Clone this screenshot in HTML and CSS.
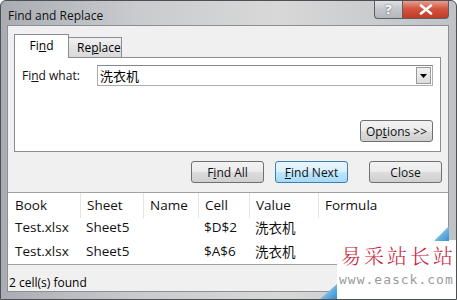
FILE: index.html
```html
<!DOCTYPE html>
<html lang="en">
<head>
    <meta charset="UTF-8">
    <title>Find and Replace</title>
    <link rel="stylesheet" href="styles.css">
</head>
<body>
    <div class="window">
        <div class="titlebar">
            <span class="title">Find and Replace</span>
            <div class="caption-btns">
                <div class="cap help">?</div>
                <div class="cap close">
                    <svg width="14" height="11" viewBox="0 0 14 11"><path d="M2 1.5 L12 9.5 M12 1.5 L2 9.5" stroke="#fff" stroke-width="2.6" stroke-linecap="round"/></svg>
                </div>
            </div>
        </div>
        <div class="client">
            <div class="tabs">
                <div class="tab active">Fi<u>n</u>d</div>
                <div class="tab">Re<u>p</u>lace</div>
            </div>
            <div class="panel">
                <div class="find-row">
                    <label class="find-label">Fi<u>n</u>d what:</label>
                    <div class="combo">
                        <span class="combo-text">洗衣机</span>
                        <div class="combo-arrow">
                            <svg width="7" height="4" viewBox="0 0 7 4"><path d="M0 0 H7 L3.5 4 Z" fill="#000"/></svg>
                        </div>
                    </div>
                </div>
                <div class="options-row">
                    <button class="btn options">Op<u>t</u>ions &gt;&gt;</button>
                </div>
            </div>
            <div class="actions">
                <button class="btn find-all">F<u>i</u>nd All</button>
                <button class="btn default find-next"><u>F</u>ind Next</button>
                <button class="btn">Close</button>
            </div>
            <div class="results">
                <div class="grid head">
                    <div>Book</div><div>Sheet</div><div>Name</div><div>Cell</div><div>Value</div><div>Formula</div>
                </div>
                <div class="grid row">
                    <div>Test.xlsx</div><div>Sheet5</div><div></div><div>$D$2</div><div class="cjk">洗衣机</div><div></div>
                </div>
                <div class="grid row">
                    <div>Test.xlsx</div><div>Sheet5</div><div></div><div>$A$6</div><div class="cjk">洗衣机</div><div></div>
                </div>
            </div>
            <div class="status">2 cell(s) found</div>
        </div>
        <div class="watermark">
            <div class="tri tri-top"></div>
            <div class="tri tri-bottom"></div>
            <div class="wm-cn">易采站长站</div>
            <div class="wm-url">www.easck.com</div>
        </div>
    </div>
</body>
</html>
```

FILE: styles.css
```css
body {
    margin: 0;
    font-family: "Open Sans", "Noto Sans CJK SC", sans-serif;
    font-size: 12px;
    color: #000;
    background: #fff;
}
.window {
    position: relative;
    width: 457px;
    height: 300px;
    box-sizing: border-box;
    background: linear-gradient(90deg, #a9adb3 0%, #c9cbce 30%, #d8d8d8 60%, #bfc2c6 100%);
    border: 1px solid #4d4f52;
    border-radius: 6px 6px 0 0;
    padding: 0 7px 7px 6px;
    display: flex;
    flex-direction: column;
    overflow: hidden;
}
.titlebar {
    height: 27px;
    display: flex;
    justify-content: space-between;
    align-items: flex-start;
}
.title {
    margin-top: 6px;
    margin-left: 1px;
    font-size: 12px;
    color: #111;
}
.caption-btns {
    display: flex;
    margin-top: -1px;
}
.cap {
    height: 19px;
    border: 1px solid #5b5e63;
    border-top: none;
    box-sizing: border-box;
    display: flex;
    align-items: center;
    justify-content: center;
}
.help {
    width: 28px;
    border-radius: 0 0 0 4px;
    background: linear-gradient(#e2e4e6, #c3c6ca 50%, #b3b7bc);
    color: #fff;
    font-weight: bold;
    font-size: 13px;
    text-shadow: 0 0 2px #555;
    border-right: none;
}
.close {
    width: 47px;
    border-radius: 0 0 4px 0;
    background: linear-gradient(#e9a99c, #d2543e 50%, #c13a24);
}
.client {
    flex: 1;
    background: #f0f0f0;
    border: 1px solid #8b8e93;
    display: flex;
    flex-direction: column;
}
.tabs {
    display: flex;
    align-items: flex-end;
    padding: 7px 0 0 6px;
    height: 24px;
}
.tab {
    box-sizing: border-box;
    border: 1px solid #898c95;
    border-bottom: none;
    padding: 0 8px;
    font-size: 12px;
}
.tab.active {
    width: 55px;
    height: 24px;
    background: #fff;
    text-align: center;
    line-height: 22px;
    position: relative;
    top: 1px;
}
.tab:not(.active) {
    width: 53px;
    height: 20px;
    line-height: 19px;
    background: linear-gradient(#f2f2f2, #e3e3e3 50%, #d9d9d9);
    border-left: none;
    text-align: center;
}
.panel {
    margin: 0 7px 0 6px;
    height: 95px;
    box-sizing: border-box;
    background: #fff;
    border: 1px solid #898c95;
    display: flex;
    flex-direction: column;
    justify-content: space-between;
    padding: 7px 7px 9px 7px;
}
.find-row {
    display: flex;
    align-items: center;
}
.find-label {
    width: 75px;
    font-size: 12px;
    color: #111;
}
.combo {
    flex: 1;
    height: 21px;
    box-sizing: border-box;
    border: 1px solid #abadb3;
    border-top-color: #828790;
    display: flex;
    align-items: center;
    justify-content: space-between;
    padding-left: 2px;
}
.combo-text {
    font-family: "Noto Sans CJK SC", sans-serif;
    font-size: 13px;
}
.combo-arrow {
    width: 15px;
    height: 17px;
    box-sizing: border-box;
    margin-right: 1px;
    border: 1px solid #9a9a9a;
    background: linear-gradient(#f2f2f2, #dcdcdc);
    display: flex;
    align-items: center;
    justify-content: center;
}
.options-row {
    display: flex;
    justify-content: flex-end;
}
.btn {
    width: 73px;
    height: 22px;
    font-family: "Open Sans", sans-serif;
    font-size: 12px;
    color: #111;
    border: 1px solid #707070;
    border-radius: 3px;
    background: linear-gradient(#f2f2f2, #ebebeb 50%, #dddddd 51%, #cfcfcf);
    padding: 0;
}
.btn.default {
    border-color: #3c7fb1;
    background: linear-gradient(#eaf6fd, #d9f0fc 50%, #bee6fd 51%, #a7d9f5);
}
.actions {
    display: flex;
    justify-content: flex-end;
    padding: 9px 6px 9px 0;
}
.find-all {
    margin-right: 11px;
}
.find-next {
    margin-right: 21px;
}
.results {
    background: #fff;
    border-top: 1px solid #a0a0a0;
    flex: 1;
}
.grid {
    display: grid;
    grid-template-columns: 72px 63px 55px 51px 69px 1fr;
    font-size: 13.5px;
    color: #111;
}
.grid > div {
    padding-left: 6px;
}
.grid > div:first-child {
    padding-left: 7px;
}
.head {
    height: 23px;
    line-height: 25px;
}
.head > div + div {
    border-left: 1px solid #e5e5e5;
}
.row {
    height: 24px;
    line-height: 22px;
}
.cjk {
    font-family: "Noto Sans CJK SC", sans-serif;
}
.status {
    height: 26px;
    line-height: 36px;
    border-top: 1px solid #a0a0a0;
    padding-left: 1px;
    font-size: 12px;
}
.watermark {
    position: absolute;
    left: 336px;
    top: 239px;
    right: 0;
    bottom: 0;
    background: #fff;
}
.tri {
    position: absolute;
    background: linear-gradient(135deg, #bfe3f7, #2f8fd0);
    clip-path: polygon(100% 0, 100% 100%, 0 100%);
}
.tri-top {
    width: 15px;
    height: 15px;
    left: 97px;
    top: -14px;
}
.tri-bottom {
    width: 17px;
    height: 15px;
    left: -17px;
    bottom: 0;
}
.wm-cn {
    margin: 3px 0 0 4px;
    font-family: "Noto Serif CJK SC", "Noto Sans CJK SC", serif;
    font-size: 20px;
    font-weight: 300;
    letter-spacing: 3px;
    color: #c8193a;
    line-height: 26px;
}
.wm-url {
    margin: 3px 0 0 2px;
    font-family: "DejaVu Sans Mono", monospace;
    font-size: 13px;
    letter-spacing: 1px;
    color: #9a9a9a;
}
```
